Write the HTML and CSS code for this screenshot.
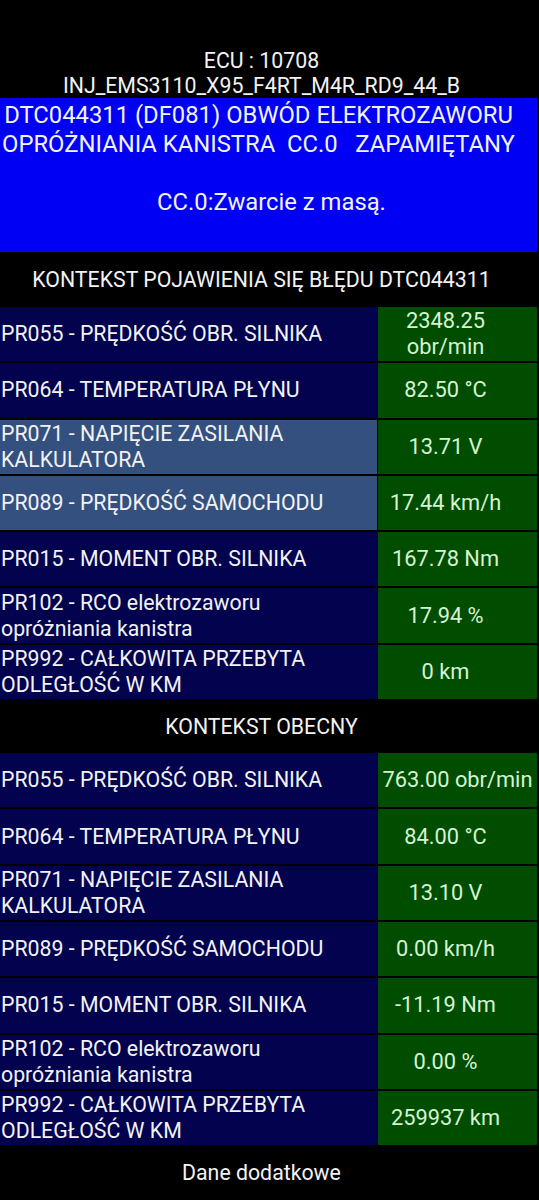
FILE: index.html
```html
<!DOCTYPE html>
<html>
	<head>
		<meta charset="UTF-8">
		<title>DTC044311</title>
		<link rel="stylesheet" href="styles.css">
	</head>
	<body>
		<div id="page">
			<div id="ecu">
				<p>ECU : 10708</p>
				<p>INJ_EMS3110_X95_F4RT_M4R_RD9_44_B</p>
			</div>
			<div id="dtc">
				<p class="code">DTC044311 (DF081) OBWÓD ELEKTROZAWORU OPRÓŻNIANIA KANISTRA  CC.0   ZAPAMIĘTANY</p>
				<p class="desc">CC.0:Zwarcie z masą.</p>
			</div>

			<div class="title">KONTEKST POJAWIENIA SIĘ BŁĘDU DTC044311</div>
			<div class="table">
				<div class="row"><div class="name">PR055 - PRĘDKOŚĆ OBR. SILNIKA</div><div class="val">2348.25 obr/min</div></div>
				<div class="row"><div class="name">PR064 - TEMPERATURA PŁYNU</div><div class="val">82.50 °C</div></div>
				<div class="row hl"><div class="name">PR071 - NAPIĘCIE ZASILANIA KALKULATORA</div><div class="val">13.71 V</div></div>
				<div class="row hl"><div class="name">PR089 - PRĘDKOŚĆ SAMOCHODU</div><div class="val">17.44 km/h</div></div>
				<div class="row"><div class="name">PR015 - MOMENT OBR. SILNIKA</div><div class="val">167.78 Nm</div></div>
				<div class="row"><div class="name">PR102 - RCO elektrozaworu opróżniania kanistra</div><div class="val">17.94 %</div></div>
				<div class="row"><div class="name">PR992 - CAŁKOWITA PRZEBYTA ODLEGŁOŚĆ W KM</div><div class="val">0 km</div></div>
			</div>

			<div class="title t2">KONTEKST OBECNY</div>
			<div class="table">
				<div class="row"><div class="name">PR055 - PRĘDKOŚĆ OBR. SILNIKA</div><div class="val wide">763.00 obr/min</div></div>
				<div class="row"><div class="name">PR064 - TEMPERATURA PŁYNU</div><div class="val">84.00 °C</div></div>
				<div class="row"><div class="name">PR071 - NAPIĘCIE ZASILANIA KALKULATORA</div><div class="val">13.10 V</div></div>
				<div class="row"><div class="name">PR089 - PRĘDKOŚĆ SAMOCHODU</div><div class="val">0.00 km/h</div></div>
				<div class="row"><div class="name">PR015 - MOMENT OBR. SILNIKA</div><div class="val">-11.19 Nm</div></div>
				<div class="row"><div class="name">PR102 - RCO elektrozaworu opróżniania kanistra</div><div class="val">0.00 %</div></div>
				<div class="row"><div class="name">PR992 - CAŁKOWITA PRZEBYTA ODLEGŁOŚĆ W KM</div><div class="val">259937 km</div></div>
			</div>

			<div id="more">Dane dodatkowe</div>
		</div>
	</body>
</html>
```

FILE: styles.css
```css
body{
	margin:0;
	background:#000;
	color:#f2f2f2;
	font-family:Roboto, "Noto Sans", sans-serif;
	font-size:21.3px;
}
#page{
	width:537px;
}
#ecu{
	padding:48px 14px 0 0;
	text-align:center;
	line-height:25px;
}
#ecu p{
	margin:0;
}
#dtc{
	background:#0000f5;
	height:154px;
	box-sizing:border-box;
	padding-top:3px;
	text-align:center;
	font-size:23.8px;
	line-height:29px;
}
#dtc p{
	margin:0;
	white-space:pre-wrap;
}
#dtc .code{
	padding-right:20px;
	margin-bottom:29px;
}
#dtc .desc{
	padding-left:6px;
}
.title{
	height:55px;
	display:flex;
	align-items:center;
	justify-content:center;
	padding-right:14px;
}
.t2{
	height:54px;
}
.row{
	display:grid;
	grid-template-columns:377px 1fr;
	column-gap:1px;
	height:54.3px;
	margin-bottom:2px;
	line-height:26px;
}
.row:last-child{
	margin-bottom:0;
}
.name{
	background:#02024f;
	padding:0 12px 0 1px;
	display:flex;
	align-items:center;
}
.hl .name{
	background:#34507f;
}
.val{
	background:#004d00;
	color:#d6f3d2;
	font-size:21.8px;
	display:flex;
	align-items:center;
	justify-content:center;
	text-align:center;
	padding:0 26px 0 2px;
}
.val.wide{
	padding:0 2px;
}
#more{
	height:55px;
	display:flex;
	align-items:center;
	justify-content:center;
	padding-right:14px;
}
```
